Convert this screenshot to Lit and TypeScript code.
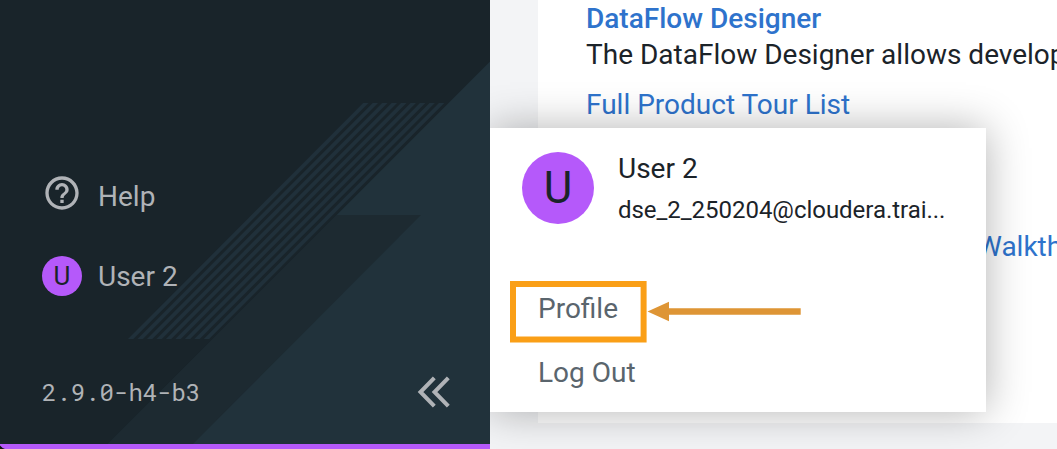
import { LitElement, html, css, svg } from "lit";
import { customElement, property } from "lit/decorators.js";

@customElement("user-avatar")
class UserAvatar extends LitElement {
  @property() initial = "";

  static styles = css`
    :host {
      display: flex;
      align-items: center;
      justify-content: center;
      flex: none;
      border-radius: 50%;
      background: #b559fa;
      color: #1b2329;
    }
  `;

  render() {
    return html`<span>${this.initial}</span>`;
  }
}

@customElement("side-nav")
class SideNav extends LitElement {
  static styles = css`
    :host {
      display: block;
      position: relative;
      width: 490px;
      height: 449px;
      flex: none;
      z-index: 2;
      overflow: hidden;
      background: #19242a;
      color: #b0b3b7;
    }
    .backdrop {
      position: absolute;
      inset: 0;
      display: block;
    }
    .content {
      position: relative;
      box-sizing: border-box;
      height: 449px;
      padding: 156px 38px 0 42px;
      display: flex;
      flex-direction: column;
    }
    .item {
      height: 80px;
      display: flex;
      align-items: center;
      gap: 16px;
      font-size: 28px;
      line-height: 36px;
    }
    .label {
      padding-top: 2px;
    }
    .help-icon {
      width: 40px;
      height: 40px;
      fill: #b0b3b7;
      margin-bottom: 7px;
    }
    .avatar {
      width: 40px;
      height: 40px;
      font-size: 26px;
    }
    .footer {
      margin-top: 56px;
      height: 40px;
      display: flex;
      align-items: center;
      justify-content: space-between;
    }
    .version {
      font: 24px/40px "Roboto Mono", "Liberation Mono", monospace;
    }
    .collapse {
      width: 36px;
      height: 36px;
      fill: none;
      stroke: #b0b3b7;
      stroke-width: 4;
    }
  `;

  render() {
    const stripes = Array.from({ length: 9 }, (_, i) => {
      const x = 128 + i * 9.47;
      return svg`<path fill="#20303a" d="M${x} 339L${x + 235.2} 103h5.4L${x + 5.4} 339z"/>`;
    });
    return html`
      <svg class="backdrop" width="490" height="449" viewBox="0 0 490 449">
        <path fill="#21323b" d="M490 61.5V444H108z" />
        <path fill="#1d2a31" d="M336.5 215H421L193 444H107.500z" />
        ${stripes}
        <path fill="#b559fa" d="M0 444h490v5H0z" />
        <path fill="#121212" d="M0 445.500Q2 448 5 449H0z" />
      </svg>
      <div class="content">
        <div class="item">
          <svg class="help-icon" viewBox="0 0 24 24">
            <path
              d="M11 18h2v-2h-2v2zm1-16C6.480 2 2 6.480 2 12s4.480 10 10 10 10-4.480 10-10S17.520 2 12 2zm0 18c-4.410 0-8-3.590-8-8s3.590-8 8-8 8 3.590 8 8-3.590 8-8 8zm0-14c-2.210 0-4 1.790-4 4h2c0-1.100.9-2 2-2s2 .9 2 2c0 2-3 1.750-3 5h2c0-2.250 3-2.500 3-5 0-2.210-1.790-4-4-4z"
            />
          </svg>
          <span class="label">Help</span>
        </div>
        <div class="item">
          <user-avatar class="avatar" initial="U"></user-avatar>
          <span class="label">User 2</span>
        </div>
        <div class="footer">
          <span class="version">2.9.0-h4-b3</span>
          <svg class="collapse" viewBox="0 0 36 36">
            <path d="M18.300 3.800L4.500 18l13.800 14.200M32.300 3.800L18.500 18l13.800 14.200" />
          </svg>
        </div>
      </div>
    `;
  }
}

@customElement("user-menu")
class UserMenu extends LitElement {
  static styles = css`
    :host {
      display: block;
      box-sizing: border-box;
      width: 496px;
      height: 284px;
      background: #fff;
      box-shadow: 0 0 40px rgba(0, 0, 0, 0.3);
      color: #1b2329;
    }
    .header {
      box-sizing: border-box;
      height: 149px;
      padding: 24px 32px 0;
      display: flex;
      gap: 24px;
    }
    .avatar {
      width: 72px;
      height: 72px;
      font-size: 44px;
    }
    .name {
      font-size: 28px;
      line-height: 36px;
      margin-top: -1px;
    }
    .email {
      font-size: 24px;
      line-height: 32px;
      margin-top: 7px;
      letter-spacing: -0.03px;
      white-space: nowrap;
    }
    .entry {
      padding-left: 48px;
      font-size: 28px;
      line-height: 64px;
      color: #5a656d;
    }
  `;

  render() {
    return html`
      <div class="header">
        <user-avatar class="avatar" initial="U"></user-avatar>
        <div>
          <div class="name">User 2</div>
          <div class="email">dse_2_250204@cloudera.trai...</div>
        </div>
      </div>
      <div class="entry">Profile</div>
      <div class="entry">Log Out</div>
    `;
  }
}

@customElement("app-root")
class AppRoot extends LitElement {
  static styles = css`
    :host {
      display: flex;
      position: relative;
      width: 1057px;
      height: 449px;
      overflow: hidden;
      background: #f3f4f6;
      font-family: Roboto, sans-serif;
    }
    .page {
      flex: 1;
      min-width: 0;
      padding-left: 48px;
    }
    .card {
      box-sizing: border-box;
      height: 423px;
      padding: 1px 0 0 48px;
      background: #fff;
      color: #1b2329;
      font-size: 28px;
      line-height: 36px;
      white-space: nowrap;
      overflow: hidden;
    }
    .title {
      font-weight: 500;
    }
    .link {
      color: #2e73cc;
    }
    .tour {
      margin-top: 14px;
    }
    .walk {
      margin-top: 106px;
      padding-left: 391px;
    }
    .menu {
      position: absolute;
      left: 490px;
      top: 128px;
    }
    .callout {
      position: absolute;
      left: 500px;
      top: 270px;
      z-index: 3;
    }
  `;

  render() {
    return html`
      <side-nav></side-nav>
      <div class="page">
        <div class="card">
          <div class="title link">DataFlow Designer</div>
          <div>The DataFlow Designer allows developers</div>
          <div class="link tour">Full Product Tour List</div>
          <div class="link walk">Walkthrough</div>
        </div>
      </div>
      <user-menu class="menu"></user-menu>
      <svg class="callout" width="310" height="80" viewBox="500 270 310 80">
        <rect x="513" y="284" width="130.600" height="55.500" fill="none" stroke="#fa9f17" stroke-width="6" />
        <path fill="#de9535" d="M647.500 311.500L669 301.800v6.500h131.700v6.500H669v6.400z" />
      </svg>
    `;
  }
}
